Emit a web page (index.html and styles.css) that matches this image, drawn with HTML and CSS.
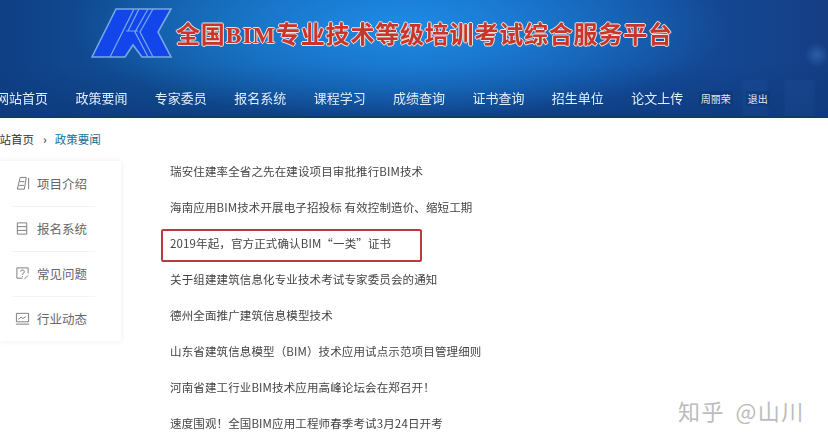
FILE: index.html
```html
<!DOCTYPE html>
<html lang="zh-CN">
<head>
<meta charset="utf-8">
<title>全国BIM专业技术等级培训考试综合服务平台</title>
<link rel="stylesheet" href="styles.css">
</head>
<body>
<header class="header">
  <div class="brand">
    <svg class="logo" viewBox="0 0 84 54" aria-hidden="true">
      <polygon class="logo-fill" points="2,50 26,2 81,2 68,25 81,50 52,50 43,38 35,50"/>
      <path class="logo-line" d="M44,2 L20,50 M49,2 L38,24 M36,24 L48,24 M58,2 L45,25 L58,50 M63,2 L50,25 L63,50"/>
    </svg>
    <h1 class="title">全国<span class="latin">BIM</span>专业技术等级培训考试综合服务平台</h1>
  </div>
  <nav class="nav">
    <a>网站首页</a><a>政策要闻</a><a>专家委员</a><a>报名系统</a><a>课程学习</a><a>成绩查询</a><a>证书查询</a><a>招生单位</a><a>论文上传</a>
    <span class="user"><b>周丽荣</b><b>退出</b></span>
  </nav>
</header>
<div class="crumbs"><span>网站首页</span><i>›</i><span class="current">政策要闻</span></div>
<main class="main">
  <aside class="side">
    <div class="side-row">
      <svg viewBox="0 0 16 16"><path d="M5.500 1.500h6.500l-2 12.500H2.500zM5 6h5M4.500 10h5M14.500 2v12"/></svg>项目介绍
    </div>
    <div class="side-row">
      <svg viewBox="0 0 16 16"><path d="M2.500 2h10v12h-10zM2.500 6h10M2.500 10h10"/></svg>报名系统
    </div>
    <div class="side-row">
      <svg viewBox="0 0 16 16"><path d="M14 8V2H2v11h6M6 6a2 1.800 0 1 1 2.500 1.800C8 8.200 8 9 8 9.500M8 11v1M10 14l4-4"/></svg>常见问题
    </div>
    <div class="side-row">
      <svg viewBox="0 0 16 16"><path d="M1.500 2.500h13v9h-13zM1 14h14M3.500 9l3-2.500 2 1.500 3-2"/></svg>行业动态
    </div>
  </aside>
  <ul class="news">
    <li>瑞安住建率全省之先在建设项目审批推行BIM技术</li>
    <li>海南应用BIM技术开展电子招投标 有效控制造价、缩短工期</li>
    <li class="marked">2019年起，官方正式确认BIM“一类”证书</li>
    <li>关于组建建筑信息化专业技术考试专家委员会的通知</li>
    <li>德州全面推广建筑信息模型技术</li>
    <li>山东省建筑信息模型（BIM）技术应用试点示范项目管理细则</li>
    <li>河南省建工行业BIM技术应用高峰论坛会在郑召开！</li>
    <li>速度围观！全国BIM应用工程师春季考试3月24日开考</li>
  </ul>
</main>
<div class="mark">知乎 @山川</div>
</body>
</html>
```
FILE: styles.css
```css
*, *::before, *::after { box-sizing: border-box; }
html, body { margin: 0; height: 100%; overflow: hidden; background: #fff; }
body { font-family: "Noto Sans CJK SC", "Liberation Sans", sans-serif; position: relative; }

.header {
  height: 118px;
  border-bottom: 2px solid #123a6c;
  background:
    radial-gradient(circle 12px at 817px 55px, rgba(70,140,215,.4), rgba(70,140,215,0) 100%),
    linear-gradient(90deg, rgba(60,110,190,0) 741px, rgba(60,110,190,.1) 744px, rgba(60,110,190,.1) 766px, rgba(60,110,190,0) 769px, rgba(60,110,190,0) 783px, rgba(60,110,190,.1) 786px, rgba(60,110,190,.1) 813px, rgba(60,110,190,0) 816px) 0 80px / 100% 36px no-repeat,
    radial-gradient(ellipse 330px 95px at 400px 25px, rgba(30,140,232,.95), rgba(30,140,232,0) 100%),
    linear-gradient(180deg, rgba(12,60,130,0) 55%, rgba(14,58,125,.85) 100%),
    linear-gradient(90deg, #0f3f85 0%, #12589f 25%, #1565b8 50%, #134f9f 75%, #153e84 100%);
  display: flex;
  flex-direction: column;
}
.brand { display: flex; align-items: center; height: 67px; padding: 1px 0 0 90px; gap: 2px; }
.logo { width: 84px; height: 54px; flex: none; }
.logo-fill { fill: #1246ea; stroke: #77a9e6; stroke-width: 1.6; }
.logo-line { fill: none; stroke: #77a9e6; stroke-width: 1.2; }
.title {
  margin: 0;
  font-size: 24px;
  line-height: 30px;
  font-weight: 700;
  color: #c9352c;
  white-space: nowrap;
  letter-spacing: .8px;
  text-shadow: 1px 0 0 #e9e4dc, -1px 0 0 #e9e4dc, 0 1px 0 #e9e4dc, 0 -1px 0 #e9e4dc;
  filter: blur(.3px);
}
.latin { font-family: "Liberation Serif", serif; }

.nav {
  display: flex;
  align-items: center;
  gap: 27.400px;
  margin-left: -4px;
  height: 24px;
  margin-top: 19px;
  font-size: 13px;
  line-height: 24px;
  color: #e3eef9;
  white-space: nowrap;
}
.nav a { flex: none; filter: blur(.25px); }
.user { display: flex; gap: 13px; margin-left: -12px; font-size: 10px; }
.user b { font-weight: 400; background: rgba(15,50,110,.45); padding: 0 2px; line-height: 15px; color: #dfe9f5; }

.crumbs {
  display: flex;
  align-items: center;
  margin-left: -12px;
  height: 18px;
  margin-top: 12px;
  font-size: 11.500px;
  color: #333;
  white-space: nowrap;
}
.crumbs i { font-style: normal; font-weight: 700; color: #555; margin: 0 8px 0 9px; }
.current { color: #1b6d9a; }

.main { display: flex; margin-top: 13px; }
.side {
  width: 121px;
  height: 180px;
  flex: none;
  background: #fff;
  box-shadow: 0 0 6px rgba(0,0,0,.08);
}
.side-row {
  height: 45px;
  display: flex;
  align-items: center;
  gap: 7px;
  padding-left: 15px;
  font-size: 12.500px;
  color: #666;
  position: relative;
  white-space: nowrap;
}
.side-row + .side-row::before {
  content: "";
  position: absolute;
  top: 0;
  left: 12px;
  right: 26px;
  border-top: 1px solid #f3f3f3;
}
.side-row svg { width: 15px; height: 15px; flex: none; fill: none; stroke: #777; stroke-width: 1; }

.news { list-style: none; margin: -8px 0 0 49px; padding: 0; font-size: 11.500px; letter-spacing: .13px; color: #444; }
.news li { height: 36px; line-height: 36px; white-space: nowrap; filter: blur(.25px); }
.marked { position: relative; }
.marked::after {
  content: "";
  position: absolute;
  left: -9px;
  top: 4px;
  width: 261px;
  height: 33px;
  border: 2px solid #b93a40;
  border-radius: 2px;
}

.mark {
  position: absolute;
  left: 678px;
  top: 395px;
  font-size: 22px;
  line-height: 30px;
  color: #bcbcbc;
  letter-spacing: 1.500px;
  word-spacing: 4px;
  white-space: nowrap;
}
```
